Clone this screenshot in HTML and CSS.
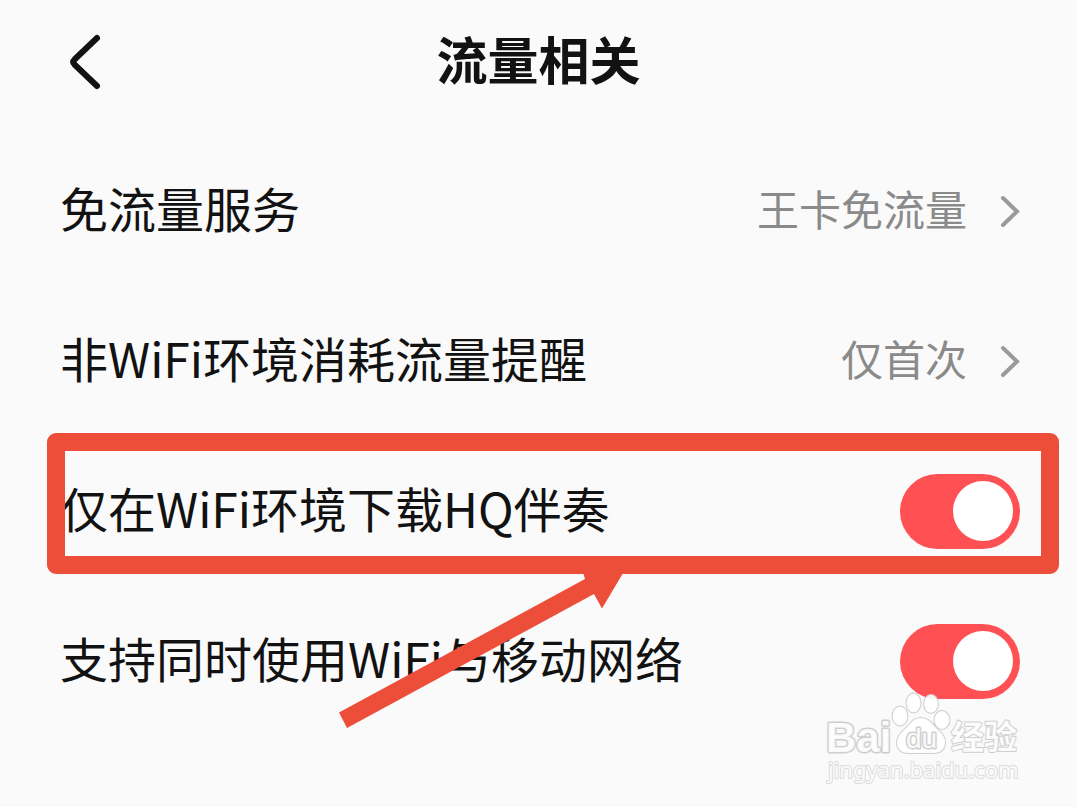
FILE: index.html
```html
<!DOCTYPE html>
<html lang="zh-CN">
<head>
<meta charset="utf-8">
<meta name="viewport" content="width=device-width, initial-scale=1">
<title>流量相关</title>
<link rel="stylesheet" href="styles.css">
</head>
<body>
<header class="topbar">
  <button class="back" type="button" aria-label="返回">
    <svg width="36" height="60" viewBox="0 0 36 60" aria-hidden="true"><path d="M31 6 L8.5 27.500 Q6 30 8.500 32.500 L31 54"/></svg>
  </button>
  <h1 class="title">流量相关</h1>
</header>
<main class="settings">
  <a class="row" href="#free">
    <span class="label">免流量服务</span>
    <span class="value">王卡免流量</span>
    <svg class="chevron" width="20" height="32" viewBox="0 0 20 32" aria-hidden="true"><path d="M3 3 L17 16.500 L3 30"/></svg>
  </a>
  <a class="row" href="#remind">
    <span class="label">非WiFi环境消耗流量提醒</span>
    <span class="value">仅首次</span>
    <svg class="chevron" width="20" height="32" viewBox="0 0 20 32" aria-hidden="true"><path d="M3 3 L17 16.500 L3 30"/></svg>
  </a>
  <div class="row">
    <label class="label" for="hq">仅在WiFi环境下载HQ伴奏</label>
    <input class="switch" id="hq" type="checkbox" role="switch" checked>
    <div class="highlight"></div>
    <svg class="arrow" width="300" height="176" viewBox="0 0 300 176" aria-hidden="true"><path d="M9 160.500 L255 27 L252 17 L299 11 L272 56.500 L264 42 L17 176 Z"/></svg>
  </div>
  <div class="row">
    <label class="label" for="both">支持同时使用WiFi与移动网络</label>
    <input class="switch" id="both" type="checkbox" role="switch" checked>
  </div>
</main>
<svg class="watermark" width="204" height="98" viewBox="0 0 204 98" role="img" aria-label="Baidu 经验">
  <text class="wm-brand" x="6" y="62">Bai</text>
  <g class="wm-paw">
    <ellipse cx="80" cy="26" rx="7.500" ry="9.500"/>
    <ellipse cx="93.500" cy="13" rx="7" ry="9.500"/>
    <ellipse cx="111" cy="14" rx="7" ry="9"/>
    <ellipse cx="122" cy="30" rx="7.500" ry="9"/>
    <path d="M101 28 C109 28 112 34 117 39 C123 44 126 49 125 54 C124 61 119 63 113 63 H88 C81 63 77 59 77 53 C77 46 82 42 87 37 C91 32 94 28 101 28 Z"/>
  </g>
  <text class="wm-du" x="86" y="58">du</text>
  <text class="wm-cn" x="131" y="59">经验</text>
  <text class="wm-url" x="8" y="88">jingyan.baidu.com</text>
</svg>
</body>
</html>
```
FILE: styles.css
```css
* { box-sizing: border-box; }
body {
  margin: 0;
  min-height: 100vh;
  position: relative;
  background: #fafafa;
  color: #121212;
  font-family: "Noto Sans CJK SC", sans-serif;
}
.topbar {
  display: grid;
  grid-template-columns: 48px 1fr 48px;
  align-items: center;
  height: 124px;
  padding: 0 60px;
  margin-bottom: 12px;
}
.back {
  display: flex;
  padding: 0 0 0 6px;
  border: 0;
  background: none;
}
.back path {
  fill: none;
  stroke: #121212;
  stroke-width: 6;
  stroke-linecap: round;
}
.title {
  margin: 0;
  padding-bottom: 8px;
  font-size: 51px;
  line-height: 72px;
  font-weight: 700;
  text-align: center;
}
.row {
  position: relative;
  display: flex;
  align-items: center;
  height: 150px;
  padding: 0 57px 0 60px;
  color: inherit;
  text-decoration: none;
}
.label {
  flex: 1;
  padding-bottom: 8px;
  font-size: 48px;
  line-height: 72px;
  white-space: nowrap;
}
.value {
  padding-bottom: 6px;
  font-size: 42px;
  line-height: 60px;
  color: #8a8a8a;
}
.chevron { margin-left: 33px; }
.chevron path {
  fill: none;
  stroke: #9a9a9a;
  stroke-width: 4;
  stroke-linecap: round;
}
.switch {
  appearance: none;
  display: flex;
  justify-content: flex-end;
  align-items: center;
  width: 120px;
  height: 75px;
  margin: 0;
  padding: 7px;
  border-radius: 38px;
  background: #ff5053;
}
.switch::before {
  content: "";
  width: 60px;
  height: 60px;
  border-radius: 50%;
  background: #fff;
}
.switch:not(:checked) {
  justify-content: flex-start;
  background: #ccc;
}
.highlight {
  position: absolute;
  inset: -3px 18px 12px 47px;
  border: 18px solid #ed4e39;
  border-radius: 9px;
  pointer-events: none;
}
.arrow {
  position: absolute;
  z-index: 1;
  left: 330px;
  top: 116px;
  fill: #ed4e39;
  pointer-events: none;
}
.watermark {
  position: absolute;
  right: 53px;
  top: 690px;
  overflow: visible;
  fill: #fff;
  fill-opacity: 0.9;
  stroke: #cfcfcf;
  stroke-width: 3;
  stroke-linejoin: round;
  paint-order: stroke;
  pointer-events: none;
}
.wm-brand {
  font: 700 42px "Liberation Sans", sans-serif;
}
.wm-paw { stroke-width: 2; }
.wm-du {
  font: 400 28px "Liberation Sans", sans-serif;
}
.wm-cn {
  font: 700 33px "Noto Sans CJK SC", sans-serif;
  stroke-width: 2;
}
.wm-url {
  font: 400 22px "Noto Sans", sans-serif;
  stroke: #dcdcdc;
  stroke-width: 2;
}
```
